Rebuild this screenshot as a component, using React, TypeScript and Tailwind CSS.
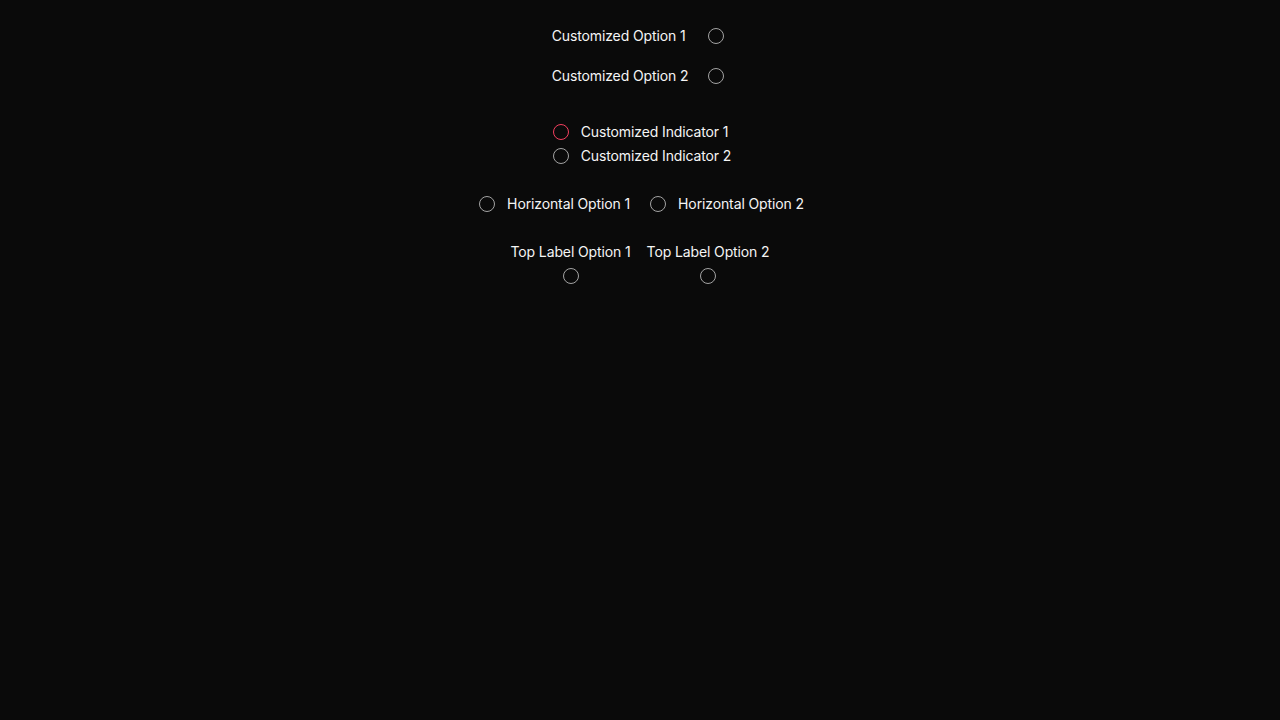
export default function App() {
  const dot = "w-4 h-4 rounded-full border border-[#a3a3a3] shrink-0";

  return (
    <div
      className="min-h-screen w-full bg-[#0a0a0a] text-[#f5f5f5] text-sm tracking-[-0.12px] flex flex-col items-center pt-6"
      style={{ fontFamily: "Inter, 'Noto Sans', sans-serif" }}
    >
      {/* Customized option: label left, radio right */}
      <div className="grid grid-cols-[auto_auto] gap-x-5 gap-y-4 items-center mr-1">
        <span className="h-6 flex items-center">Customized Option 1</span>
        <span className={dot} />
        <span className="h-6 flex items-center">Customized Option 2</span>
        <span className={dot} />
      </div>

      {/* Customized indicator */}
      <div className="flex flex-col mt-8 ml-1">
        <div className="flex items-center gap-3 h-6">
          <span className="w-4 h-4 rounded-full border border-[#f43f5e] shrink-0" />
          <span>Customized Indicator 1</span>
        </div>
        <div className="flex items-center gap-3 h-6">
          <span className={dot} />
          <span>Customized Indicator 2</span>
        </div>
      </div>

      {/* Horizontal */}
      <div className="flex items-center gap-5 mt-6 h-6 ml-[3px]">
        <div className="flex items-center gap-3">
          <span className={dot} />
          <span>Horizontal Option 1</span>
        </div>
        <div className="flex items-center gap-3">
          <span className={dot} />
          <span>Horizontal Option 2</span>
        </div>
      </div>

      {/* Top label */}
      <div className="flex gap-4 mt-6">
        <div className="flex flex-col items-center">
          <span className="h-6 flex items-center">Top Label Option 1</span>
          <span className="h-6 flex items-center">
            <span className={dot} />
          </span>
        </div>
        <div className="flex flex-col items-center">
          <span className="h-6 flex items-center">Top Label Option 2</span>
          <span className="h-6 flex items-center">
            <span className={dot} />
          </span>
        </div>
      </div>
    </div>
  );
}
